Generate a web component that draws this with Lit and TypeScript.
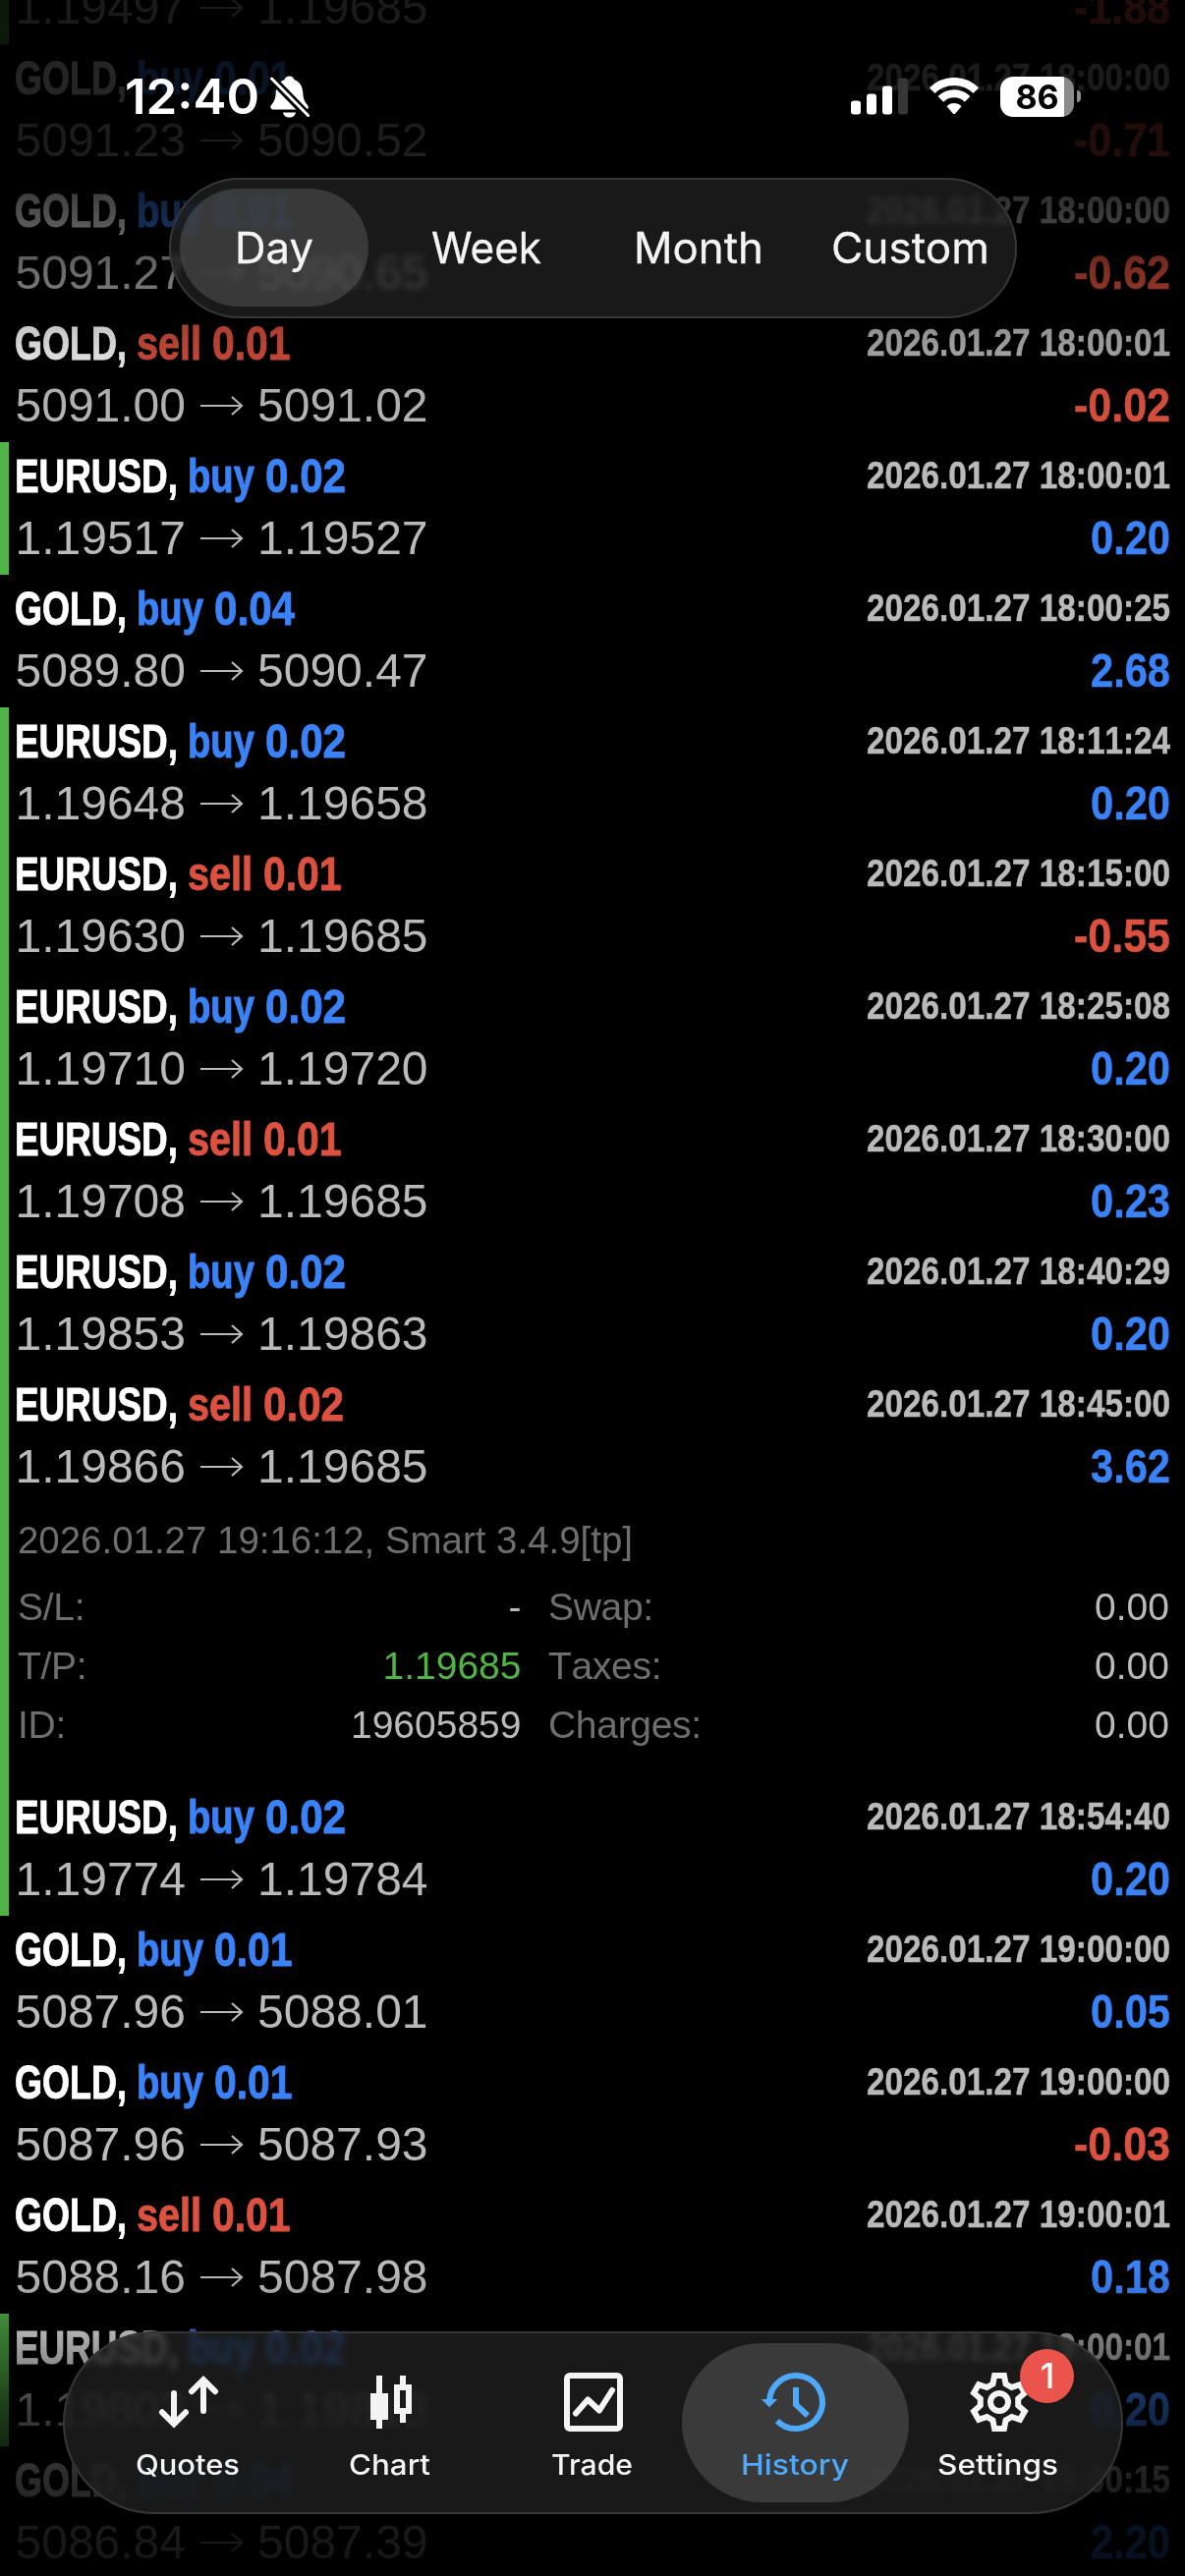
import { LitElement, html, svg, css, nothing } from "lit";
import { customElement, property, state } from "lit/decorators.js";
import { classMap } from "lit/directives/class-map.js";

interface Deal {
  symbol: string;
  side: "buy" | "sell";
  volume: string;
  open: string;
  close: string;
  time: string;
  profit: string;
  marked?: boolean;
  expanded?: boolean;
}

const deal = (
  symbol: string,
  side: "buy" | "sell",
  volume: string,
  open: string,
  close: string,
  time: string,
  profit: string,
  marked = false,
  expanded = false
): Deal => ({ symbol, side, volume, open, close, time: `2026.01.27 ${time}`, profit, marked, expanded });

const DEALS: Deal[] = [
  deal("EURUSD", "sell", "0.01", "1.19497", "1.19685", "18:00:00", "-1.88", true),
  deal("GOLD", "buy", "0.01", "5091.23", "5090.52", "18:00:00", "-0.71"),
  deal("GOLD", "buy", "0.01", "5091.27", "5090.65", "18:00:00", "-0.62"),
  deal("GOLD", "sell", "0.01", "5091.00", "5091.02", "18:00:01", "-0.02"),
  deal("EURUSD", "buy", "0.02", "1.19517", "1.19527", "18:00:01", "0.20", true),
  deal("GOLD", "buy", "0.04", "5089.80", "5090.47", "18:00:25", "2.68"),
  deal("EURUSD", "buy", "0.02", "1.19648", "1.19658", "18:11:24", "0.20", true),
  deal("EURUSD", "sell", "0.01", "1.19630", "1.19685", "18:15:00", "-0.55", true),
  deal("EURUSD", "buy", "0.02", "1.19710", "1.19720", "18:25:08", "0.20", true),
  deal("EURUSD", "sell", "0.01", "1.19708", "1.19685", "18:30:00", "0.23", true),
  deal("EURUSD", "buy", "0.02", "1.19853", "1.19863", "18:40:29", "0.20", true),
  deal("EURUSD", "sell", "0.02", "1.19866", "1.19685", "18:45:00", "3.62", true, true),
  deal("EURUSD", "buy", "0.02", "1.19774", "1.19784", "18:54:40", "0.20", true),
  deal("GOLD", "buy", "0.01", "5087.96", "5088.01", "19:00:00", "0.05"),
  deal("GOLD", "buy", "0.01", "5087.96", "5087.93", "19:00:00", "-0.03"),
  deal("GOLD", "sell", "0.01", "5088.16", "5087.98", "19:00:01", "0.18"),
  deal("EURUSD", "buy", "0.02", "1.19803", "1.19813", "19:00:01", "0.20", true),
  deal("GOLD", "buy", "0.04", "5086.84", "5087.39", "19:00:15", "2.20"),
];

/* Condensed widths of the bold labels, in px */
const SYMBOL_WIDTH: Record<string, number> = { GOLD: 114, EURUSD: 166 };
const SIDE_WIDTH = { buy: 68, sell: 66 };

/* A single line of text squeezed or stretched to a given width */
@customElement("fit-text")
export class FitText extends LitElement {
  @property() text = "";
  @property({ type: Number }) width = 0;

  static styles = css`
    :host {
      display: inline-block;
      white-space: nowrap;
    }
    .inner {
      display: inline-block;
      transform-origin: 0 50%;
    }
  `;

  updated() {
    const inner = this.renderRoot.querySelector<HTMLElement>(".inner")!;
    inner.style.transform = "none";
    const natural = inner.getBoundingClientRect().width;
    this.style.width = `${this.width}px`;
    inner.style.transform = `scaleX(${this.width / natural})`;
  }

  render() {
    return html`<span class="inner">${this.text}</span>`;
  }
}

@customElement("deal-row")
export class DealRow extends LitElement {
  @property({ attribute: false }) deal!: Deal;

  static styles = css`
    :host {
      display: block;
      font-family: "Liberation Sans", Arial, sans-serif;
      font-kerning: none;
      color: #bababa;
    }
    .row {
      box-sizing: border-box;
      border-left: 9px solid transparent;
      padding: 0 15px 0 6px;
      height: 135px;
    }
    .row.marked {
      border-left-color: #52b347;
    }
    .row.expanded {
      height: 420px;
    }
    .line {
      display: flex;
      justify-content: space-between;
    }
    .head {
      height: 69px;
      line-height: 69px;
      font-weight: 700;
      font-size: 48px;
      -webkit-text-stroke: 0.9px currentColor;
    }
    .title {
      display: flex;
      gap: 10px;
    }
    .side {
      display: flex;
      gap: 10.5px;
    }
    .symbol {
      color: #fff;
    }
    .time {
      font-size: 39px;
      line-height: 68px;
      -webkit-text-stroke: 0.5px currentColor;
    }
    .foot {
      height: 66px;
      line-height: 57px;
      font-size: 48px;
    }
    .prices {
      display: flex;
      padding-left: 0.5px;
    }
    .arrow {
      width: 44px;
      height: 20px;
      margin: 19px 14.5px 0 14.5px;
      fill: none;
      stroke: #bababa;
      stroke-width: 2.2;
    }
    .profit {
      font-weight: 700;
      -webkit-text-stroke: 0.5px currentColor;
    }
    .up {
      color: #3a82f7;
    }
    .down {
      color: #dc513f;
    }
    .details {
      font-size: 39px;
      padding-left: 3px;
    }
    .comment {
      line-height: 76px;
      color: #6e6e6e;
    }
    .grid {
      display: grid;
      grid-template-columns: 512.5px 632px;
      column-gap: 27.5px;
    }
    .pair {
      display: flex;
      justify-content: space-between;
      line-height: 60px;
    }
    .key {
      color: #6e6e6e;
      letter-spacing: -0.3px;
    }
    .take {
      color: #52b347;
    }
  `;

  private pair(key: string, value: string, take = false) {
    return html`<div class="pair">
      <span class="key">${key}</span><span class=${classMap({ take })}>${value}</span>
    </div>`;
  }

  private details() {
    return html`<div class="details">
      <div class="comment">
        <fit-text text="2026.01.27 19:16:12, Smart 3.4.9[tp]" .width=${626}></fit-text>
      </div>
      <div class="grid">
        ${this.pair("S/L:", "-")} ${this.pair("Swap:", "0.00")}
        ${this.pair("T/P:", "1.19685", true)} ${this.pair("Taxes:", "0.00")}
        ${this.pair("ID:", "19605859")} ${this.pair("Charges:", "0.00")}
      </div>
    </div>`;
  }

  render() {
    const d = this.deal;
    const loss = d.profit.startsWith("-");
    return html`<div class=${classMap({ row: true, marked: !!d.marked, expanded: !!d.expanded })}>
      <div class="line head">
        <div class="title">
          <fit-text class="symbol" .text=${`${d.symbol},`} .width=${SYMBOL_WIDTH[d.symbol]}></fit-text>
          <div class="side ${d.side === "buy" ? "up" : "down"}">
            <fit-text .text=${d.side} .width=${SIDE_WIDTH[d.side]}></fit-text>
            <fit-text .text=${d.volume} .width=${d.volume.endsWith("1") ? 79.5 : 82}></fit-text>
          </div>
        </div>
        <fit-text class="time" .text=${d.time} .width=${309}></fit-text>
      </div>
      <div class="line foot">
        <div class="prices">
          <span>${d.open}</span>
          <svg class="arrow" viewBox="0 0 44 20"><path d="M0 10H42M32 1L42 10L32 19" /></svg>
          <span>${d.close}</span>
        </div>
        <fit-text class="profit ${loss ? "down" : "up"}" .text=${d.profit} .width=${loss ? 98 : 81}></fit-text>
      </div>
      ${d.expanded ? this.details() : nothing}
    </div>`;
  }
}

@customElement("status-bar")
export class StatusBar extends LitElement {
  static styles = css`
    :host {
      display: flex;
      align-items: center;
      box-sizing: border-box;
      height: 196px;
      padding: 0 106px 0 127px;
      color: #fff;
      font-family: Inter, "Liberation Sans", sans-serif;
    }
    .clock {
      font-size: 50px;
      font-weight: 600;
      line-height: 60px;
    }
    .bell {
      width: 40px;
      height: 43px;
      margin-left: 11px;
    }
    .right {
      margin-left: auto;
      display: flex;
      align-items: center;
    }
    .signal {
      width: 58px;
      height: 38px;
      margin-right: 22.5px;
    }
    .wifi {
      width: 50px;
      height: 38px;
      margin-right: 22px;
    }
    .battery {
      width: 75px;
      height: 41px;
      border-radius: 13px;
      background: linear-gradient(90deg, #fff 0 65px, #8b8b8b 65px);
      color: #000;
      font-size: 34px;
      font-weight: 650;
      line-height: 41px;
      display: flex;
      justify-content: center;
    }
    .nub {
      width: 4px;
      height: 12px;
      margin-left: 3px;
      border-radius: 0 4px 4px 0;
      background: #8b8b8b;
    }
  `;

  render() {
    return html`
      <fit-text class="clock" text="12:40" .width=${137}></fit-text>
      <svg class="bell" viewBox="0 0 40 43">
        <path
          fill="#fff"
          d="M19.5 0.5C22 0.5 23.8 2 24.4 4C30 6 33 11 33.3 17.5C33.5 24 35.5 27 38 30C39.5 32 39 34.5 36 34.5H3.500C0.500 34.5 -0.500 32 1 30C3.500 27 5.500 24 5.700 17.5C6 11 9 6 14.600 4C15.200 2 17 0.5 19.5 0.5ZM13 37.500H26C25.500 40.500 23 42.500 19.500 42.500C16 42.500 13.500 40.500 13 37.500Z"
        />
        <path d="M-1 0.500L41 43.500" stroke="#000" stroke-width="8.500" />
        <path d="M1.500 3L38.500 40.500" stroke="#fff" stroke-width="3" stroke-linecap="round" />
      </svg>
      <div class="right">
        <svg class="signal" viewBox="0 0 58 38" fill="#fff">
          <rect x="0" y="23.500" width="10" height="14" rx="3" />
          <rect x="16" y="16.500" width="10" height="21" rx="3" />
          <rect x="32" y="8.500" width="10" height="29" rx="3" />
          <rect x="48" y="0.500" width="10" height="37" rx="3" fill="#363636" />
        </svg>
        <svg class="wifi" viewBox="0 0 50 38">
          <g fill="none" stroke="#fff" stroke-width="8">
            <path d="M2.700 13.200A31.500 31.500 0 0 1 47.300 13.200" />
            <path d="M11.400 21.900A19.300 19.300 0 0 1 38.600 21.900" />
          </g>
          <path d="M17.500 29.200A10.400 10.400 0 0 1 32.500 29.200L26.200 36.500Q25 37.700 23.800 36.500Z" fill="#fff" />
        </svg>
        <div class="battery"><span>86</span></div>
        <div class="nub"></div>
      </div>
    `;
  }
}

@customElement("period-switch")
export class PeriodSwitch extends LitElement {
  @state() private active = "Day";

  static styles = css`
    :host {
      display: block;
      font-family: Inter, "Liberation Sans", sans-serif;
    }
    .pill {
      box-sizing: border-box;
      width: 863px;
      height: 143px;
      border-radius: 72px;
      background: rgba(33, 33, 33, 0.76);
      backdrop-filter: blur(3.5px) saturate(1.5) brightness(1.5);
      box-shadow: inset 0 0 0 2px #363636;
      display: grid;
      grid-template-columns: repeat(4, 1fr);
      align-items: center;
      justify-items: center;
      color: #f4f4f4;
      font-size: 43.5px;
      font-weight: 400;
      -webkit-text-stroke: 0.3px currentColor;
    }
    .item {
      display: flex;
      align-items: center;
      justify-content: center;
      width: 192px;
      height: 120px;
      border-radius: 60px;
    }
    .item.active {
      background: rgba(96, 96, 96, 0.46);
    }
  `;

  render() {
    const items: [string, number][] = [
      ["Day", 80],
      ["Week", 112],
      ["Month", 132],
      ["Custom", 161],
    ];
    return html`<div class="pill">
      ${items.map(
        ([name, width]) => html`<div
          class=${classMap({ item: true, active: name === this.active })}
          @click=${() => (this.active = name)}
        >
          <fit-text .text=${name} .width=${width}></fit-text>
        </div>`
      )}
    </div>`;
  }
}

/* Six-tooth gear outline around (30, 30) */
const gearPoints = Array.from({ length: 6 }, (_, k) => {
  const a = (k * Math.PI) / 3;
  const tooth = [
    [-6.6, -18.4],
    [-4.9, -27.1],
    [4.9, -27.1],
    [6.6, -18.4],
  ];
  return tooth
    .map(([x, y]) => {
      const rx = 30 + x * Math.cos(a) - y * Math.sin(a);
      const ry = 30 + x * Math.sin(a) + y * Math.cos(a);
      return `${rx.toFixed(2)},${ry.toFixed(2)}`;
    })
    .join(" ");
}).join(" ");

const TAB_ICONS: Record<string, unknown> = {
  Quotes: svg`<g fill="none" stroke="currentColor" stroke-width="6" stroke-linecap="round">
    <path d="M15 21V52M3 40.300L15 52.300L27 40.300" />
    <path d="M45 39V8M33 19.200L45 7.200L57 19.200" />
  </g>`,
  Chart: svg`<g fill="currentColor">
    <path d="M15 3h6v18h6v27h-6v9h-6v-9h-6v-27h6z" />
    <path fill-rule="evenodd" d="M39 3h6v9h6v30h-6v9h-6v-9h-6v-30h6zM39 18v18h6v-18z" />
  </g>`,
  Trade: svg`<g fill="none" stroke="currentColor" stroke-width="6">
    <rect x="3" y="3" width="54" height="54" rx="3" />
    <path d="M12 41.500L24.300 27.500L36 38.500L49 18" stroke-linecap="round" stroke-linejoin="round" />
  </g>`,
  History: svg`<g fill="none" stroke="currentColor" stroke-width="6">
    <path d="M3 30A27 27 0 1 1 10.900 49.100" />
    <path d="M30 15V32.500L42 43.800" />
    <path d="M-5.300 27H11.300L3 35.300Z" fill="currentColor" stroke="none" />
  </g>`,
  Settings: svg`<g fill="none" stroke="currentColor" stroke-width="6">
    <polygon points=${gearPoints} />
    <circle cx="30" cy="30" r="9" />
  </g>`,
};

@customElement("tab-bar")
export class TabBar extends LitElement {
  @state() private active = "History";

  static styles = css`
    :host {
      display: block;
      font-family: Inter, "Liberation Sans", sans-serif;
    }
    .bar {
      box-sizing: border-box;
      width: 1079px;
      height: 186px;
      padding: 0 24px;
      border-radius: 93px;
      background: rgba(31, 31, 31, 0.8);
      backdrop-filter: blur(3.5px) saturate(1.4) brightness(1.2);
      box-shadow: inset 0 0 0 2px #363636;
      display: grid;
      grid-template-columns: repeat(5, 1fr);
      align-items: center;
      color: #f4f4f4;
    }
    .tab {
      position: relative;
      box-sizing: border-box;
      height: 162px;
      margin: 0 -12.4px;
      padding-top: 30px;
      border-radius: 81px;
      display: flex;
      flex-direction: column;
      align-items: center;
      gap: 17px;
    }
    .tab.active {
      background: rgba(88, 88, 88, 0.52);
      color: #4fa9fb;
    }
    .icon {
      width: 60px;
      height: 60px;
      margin-left: 2.5px;
      overflow: visible;
    }
    .label {
      font-size: 29px;
      line-height: 34px;
      font-weight: 500;
    }
    .badge {
      position: absolute;
      left: 138.5px;
      top: 6px;
      width: 55px;
      height: 55px;
      border-radius: 50%;
      background: #eb544d;
      color: #fff;
      font-size: 35px;
      line-height: 55px;
      text-align: center;
      font-weight: 500;
    }
  `;

  render() {
    const tabs: [string, number][] = [
      ["Quotes", 106],
      ["Chart", 83],
      ["Trade", 83],
      ["History", 110],
      ["Settings", 123],
    ];
    return html`<div class="bar">
      ${tabs.map(
        ([name, width]) => html`<div
          class=${classMap({ tab: true, active: name === this.active })}
          @click=${() => (this.active = name)}
        >
          <svg class="icon" viewBox="0 0 60 60">${TAB_ICONS[name]}</svg>
          <fit-text class="label" .text=${name} .width=${width}></fit-text>
          ${name === "Settings" ? html`<div class="badge">1</div>` : nothing}
        </div>`
      )}
    </div>`;
  }
}

@customElement("app-root")
export class AppRoot extends LitElement {
  static styles = css`
    :host {
      display: block;
      background: #000;
    }
    .screen {
      position: relative;
      width: 1206px;
      height: 2622px;
      overflow: hidden;
      background: #000;
    }
    .list {
      margin-top: -90px;
    }
    .fade {
      position: absolute;
      inset: 0;
      background: linear-gradient(
        180deg,
        rgba(0, 0, 0, 0.86) 0,
        rgba(0, 0, 0, 0.85) 150px,
        rgba(0, 0, 0, 0.76) 195px,
        rgba(0, 0, 0, 0.65) 230px,
        rgba(0, 0, 0, 0.43) 275px,
        rgba(0, 0, 0, 0.23) 330px,
        rgba(0, 0, 0, 0.12) 368px,
        rgba(0, 0, 0, 0.05) 410px,
        transparent 460px,
        transparent 2310px,
        rgba(0, 0, 0, 0.2) 2355px,
        rgba(0, 0, 0, 0.31) 2374px,
        rgba(0, 0, 0, 0.44) 2405px,
        rgba(0, 0, 0, 0.66) 2450px,
        rgba(0, 0, 0, 0.78) 2490px,
        rgba(0, 0, 0, 0.84) 2530px,
        rgba(0, 0, 0, 0.87) 2580px,
        rgba(0, 0, 0, 0.88) 2622px
      );
    }
    .status {
      position: absolute;
      left: 0;
      right: 0;
      top: 0;
    }
    .periods {
      position: absolute;
      left: 171.5px;
      top: 180.5px;
    }
    .tabs {
      position: absolute;
      left: 63.5px;
      top: 2373px;
    }
  `;

  render() {
    return html`<div class="screen">
      <div class="list">${DEALS.map((d) => html`<deal-row .deal=${d}></deal-row>`)}</div>
      <div class="fade"></div>
      <status-bar class="status"></status-bar>
      <period-switch class="periods"></period-switch>
      <tab-bar class="tabs"></tab-bar>
    </div>`;
  }
}
